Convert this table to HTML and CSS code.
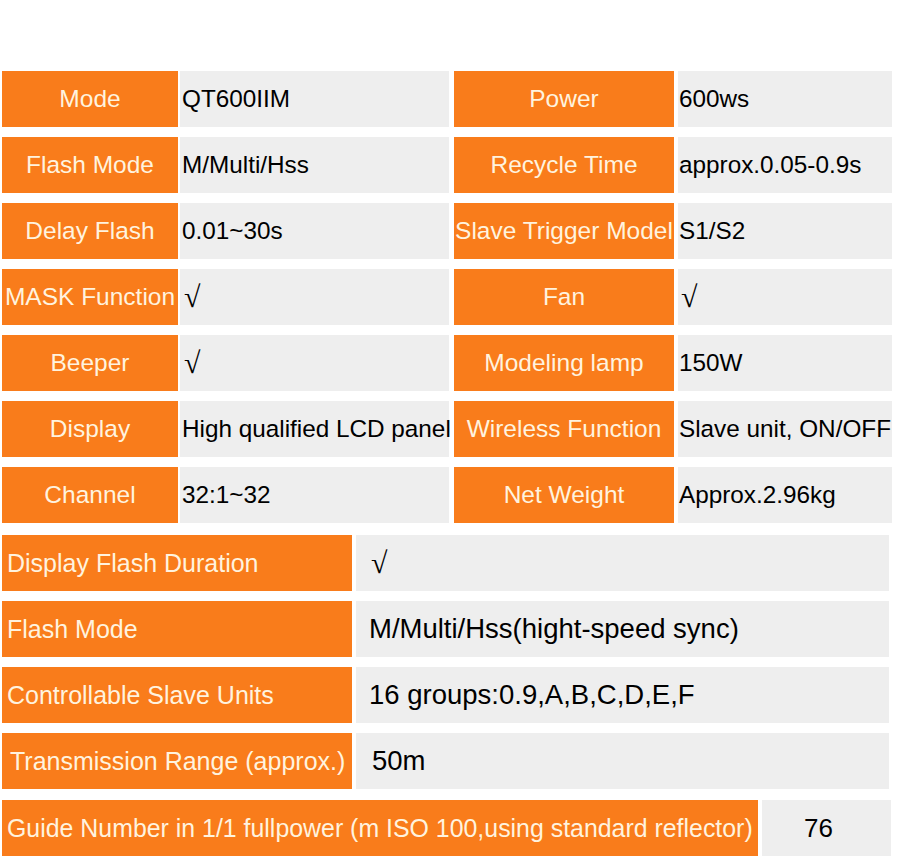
FILE: index.html
```html
<!DOCTYPE html>
<html>
<head>
<meta charset="utf-8">
<link rel="stylesheet" href="styles.css">
</head>
<body>
<div class="page">
  <div class="specs">
    <div class="row"><div class="lab lab-l">Mode</div><div class="val val-l">QT600IIM</div><div class="lab lab-r">Power</div><div class="val val-r">600ws</div></div>
    <div class="row"><div class="lab lab-l">Flash Mode</div><div class="val val-l">M/Multi/Hss</div><div class="lab lab-r">Recycle Time</div><div class="val val-r">approx.0.05-0.9s</div></div>
    <div class="row"><div class="lab lab-l">Delay Flash</div><div class="val val-l">0.01~30s</div><div class="lab lab-r">Slave Trigger Model</div><div class="val val-r">S1/S2</div></div>
    <div class="row"><div class="lab lab-l">MASK Function</div><div class="val val-l"><span class="chk">√</span></div><div class="lab lab-r">Fan</div><div class="val val-r"><span class="chk">√</span></div></div>
    <div class="row"><div class="lab lab-l">Beeper</div><div class="val val-l"><span class="chk">√</span></div><div class="lab lab-r">Modeling lamp</div><div class="val val-r">150W</div></div>
    <div class="row"><div class="lab lab-l">Display</div><div class="val val-l">High qualified LCD panel</div><div class="lab lab-r">Wireless Function</div><div class="val val-r">Slave unit, ON/OFF</div></div>
    <div class="row"><div class="lab lab-l">Channel</div><div class="val val-l">32:1~32</div><div class="lab lab-r">Net Weight</div><div class="val val-r">Approx.2.96kg</div></div>
  </div>
  <div class="specs wide">
    <div class="row"><div class="lab lab-w">Display Flash Duration</div><div class="val val-w"><span class="chk">√</span></div></div>
    <div class="row"><div class="lab lab-w">Flash Mode</div><div class="val val-w">M/Multi/Hss(hight-speed sync)</div></div>
    <div class="row"><div class="lab lab-w">Controllable Slave Units</div><div class="val val-w">16 groups:0.9,A,B,C,D,E,F</div></div>
    <div class="row"><div class="lab lab-w lab-tr">Transmission Range (approx.)</div><div class="val val-w val-tr">50m</div></div>
    <div class="row row-last"><div class="lab lab-g">Guide Number in 1/1 fullpower (m ISO 100,using standard reflector)</div><div class="val val-g">76</div></div>
  </div>
</div>
</body>
</html>
```

FILE: styles.css
```css
html, body {
  margin: 0;
  padding: 0;
  background: #ffffff;
}

*, *::before, *::after {
  box-sizing: border-box;
}

.page {
  padding: 71px 0 0 2px;
  font-family: "Liberation Sans", Arial, sans-serif;
  font-size: 24px;
}

.specs {
  display: flex;
  flex-direction: column;
  gap: 10px;
}

.specs.wide {
  margin-top: 12px;
}

.row {
  display: flex;
  height: 56px;
}

.row-last {
  margin-top: 1px;
}

.lab {
  background: #f97c1b;
  color: #fff3df;
  display: flex;
  align-items: center;
  justify-content: center;
  white-space: nowrap;
  font-size: 24.5px;
  flex: none;
}

.val {
  background: #eeeeee;
  color: #000000;
  display: flex;
  align-items: center;
  white-space: nowrap;
  font-size: 24.3px;
  flex: none;
}

.lab-l { width: 176px; }
.val-l { width: 269px; margin-left: 2px; padding-left: 2px; }
.lab-r { width: 220px; margin-left: 5px; }
.val-r { width: 214px; margin-left: 4px; padding-left: 1px; }

.lab-w {
  width: 350px;
  justify-content: flex-start;
  padding-left: 5px;
  font-size: 25px;
}
.val-w {
  width: 533px;
  margin-left: 4px;
  padding-left: 13px;
  font-size: 27.5px;
}
.lab-tr { padding-left: 8px; }
.val-tr { padding-left: 16px; }

.lab-g {
  width: 756px;
  justify-content: flex-start;
  padding-left: 5px;
  font-size: 24.9px;
}
.val-g {
  width: 129px;
  margin-left: 4px;
  justify-content: center;
  padding-right: 16px;
  font-size: 26px;
}

.chk {
  font-family: "Liberation Serif", serif;
  font-size: 30px;
  line-height: 1;
  padding-left: 2px;
}
```
